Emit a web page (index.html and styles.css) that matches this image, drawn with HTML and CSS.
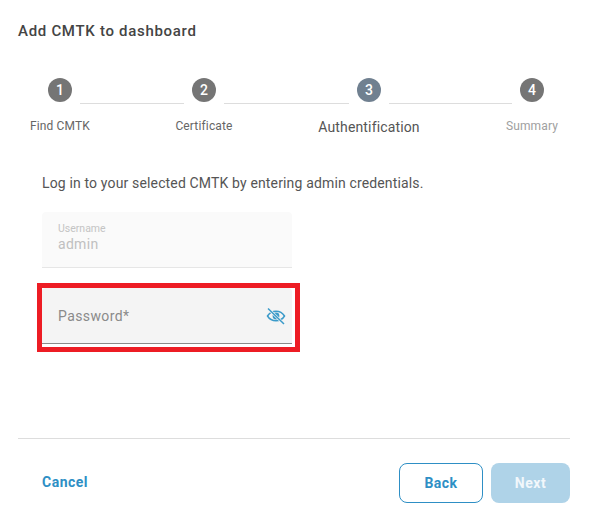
FILE: index.html
```html
<!DOCTYPE html>
<html lang="en">

<head>
    <meta charset="UTF-8">
    <meta name="viewport" content="width=device-width, initial-scale=1.0">
    <title>Add CMTK to dashboard</title>
    <link rel="stylesheet" href="styles.css">
</head>

<body>
    <div class="dialog">
        <h1 class="dialog-title">Add CMTK to dashboard</h1>

        <!-- Stepper -->
        <div class="stepper">
            <div class="step">
                <span class="step-num">1</span>
                <span class="step-label">Find CMTK</span>
            </div>
            <div class="step-line line-a"></div>
            <div class="step">
                <span class="step-num">2</span>
                <span class="step-label">Certificate</span>
            </div>
            <div class="step-line line-b"></div>
            <div class="step step-active">
                <span class="step-num">3</span>
                <span class="step-label">Authentification</span>
            </div>
            <div class="step-line line-c"></div>
            <div class="step step-todo">
                <span class="step-num">4</span>
                <span class="step-label">Summary</span>
            </div>
        </div>

        <!-- Form -->
        <div class="dialog-body">
            <p class="intro">Log in to your selected CMTK by entering admin credentials.</p>

            <div class="field field-disabled">
                <span class="field-label">Username</span>
                <span class="field-value">admin</span>
            </div>

            <div class="field field-password">
                <span class="field-placeholder">Password*</span>
                <svg class="eye-icon" width="20" height="20" viewBox="0 0 20 20" fill="none" stroke="#3a9ac9" stroke-width="1.500">
                    <path d="M1.500 10C3.500 6.700 6.500 5.200 10 5.200s6.500 1.500 8.500 4.800c-2 3.300-5 4.800-8.500 4.800s-6.500-1.500-8.500-4.800z" />
                    <circle cx="10" cy="10" r="3.400" fill="#3a9ac9" stroke="none" />
                    <path d="M2 2.500l16 15.500" stroke="#f4f4f4" stroke-width="2.600" />
                    <path d="M2 2.500l16 15.500" />
                </svg>
                <div class="highlight"></div>
            </div>
        </div>

        <!-- Footer -->
        <div class="dialog-footer">
            <a href="#" class="cancel-link">Cancel</a>
            <div class="footer-btns">
                <button type="button" class="btn btn-back">Back</button>
                <button type="button" class="btn btn-next" disabled>Next</button>
            </div>
        </div>
    </div>
</body>

</html>
```

FILE: styles.css
```css
/* Page */
body {
    margin: 0;
    background-color: white;
    font-family: Roboto, "Liberation Sans", Arial, sans-serif;
    color: #333;
}

.dialog {
    width: 589px;
    height: 523px;
    padding: 22px 19px 0 18px;
    box-sizing: border-box;
    display: flex;
    flex-direction: column;
}

.dialog-title {
    margin: 0;
    font-size: 15px;
    line-height: 18px;
    font-weight: 500;
    letter-spacing: 0.7px;
    color: #444;
}

/* Stepper */
.stepper {
    display: flex;
    margin-top: 38px;
    padding-left: 30px;
}

.step {
    width: 24px;
    display: flex;
    flex-direction: column;
    align-items: center;
}

.step-num {
    width: 24px;
    height: 24px;
    border-radius: 50%;
    background-color: #757575;
    color: white;
    font-size: 14px;
    font-weight: 500;
    line-height: 24px;
    text-align: center;
}

.step-label {
    margin-top: 17px;
    font-size: 12px;
    line-height: 14px;
    letter-spacing: 0.15px;
    white-space: nowrap;
    color: #666;
}

.step-active .step-num {
    background-color: #708090;
}

.step-active .step-label {
    margin-top: 17px;
    font-size: 14px;
    line-height: 17px;
    letter-spacing: 0.15px;
    color: #555;
}

.step-todo .step-label {
    color: #a0a0a0;
}

.step-line {
    height: 1px;
    margin: 25px 8px 0;
    background-color: #ddd;
}

.line-a {
    width: 104px;
}

.line-b {
    width: 125px;
}

.line-c {
    width: 123px;
}

/* Form */
.dialog-body {
    flex: 1;
    padding: 39px 0 0 24px;
}

.intro {
    margin: 0 0 20px;
    font-size: 14px;
    line-height: 17px;
    letter-spacing: 0.15px;
    color: #555;
}

.field {
    position: relative;
    width: 250px;
    box-sizing: border-box;
    padding-left: 16px;
    border-radius: 4px 4px 0 0;
}

.field-disabled {
    height: 56px;
    padding-top: 10px;
    background-color: #fafafa;
    border-bottom: 1px solid #e6e6e6;
    display: flex;
    flex-direction: column;
}

.field-label {
    font-size: 10.5px;
    line-height: 13px;
    color: #c4c4c4;
}

.field-value {
    margin-top: 1px;
    font-size: 14px;
    line-height: 17px;
    letter-spacing: 0.3px;
    color: #c0c0c0;
}

.field-password {
    height: 56px;
    margin-top: 20px;
    padding-right: 6px;
    background-color: #f4f4f4;
    border-bottom: 1px solid #8a8a8a;
    display: flex;
    align-items: center;
    justify-content: space-between;
}

.field-placeholder {
    font-size: 14px;
    letter-spacing: 0.4px;
    color: #8a8a8a;
}

/* Red annotation drawn over the password field */
.highlight {
    position: absolute;
    top: -5px;
    left: -5px;
    width: 263px;
    height: 69px;
    box-sizing: border-box;
    border: 5px solid #ed1c24;
}

/* Footer */
.dialog-footer {
    height: 85px;
    box-sizing: border-box;
    border-top: 1px solid #ddd;
    padding: 24px 0 0 24px;
    display: flex;
    justify-content: space-between;
    align-items: flex-start;
}

.cancel-link {
    margin-top: 11px;
    font-size: 14px;
    line-height: 17px;
    font-weight: 700;
    letter-spacing: 0.5px;
    color: #2e8fc5;
    text-decoration: none;
}

.footer-btns {
    display: flex;
    gap: 8px;
}

.btn {
    height: 40px;
    padding-bottom: 2px;
    border-radius: 8px;
    font-family: inherit;
    font-size: 14px;
    font-weight: 700;
    letter-spacing: 0.5px;
}

.btn-back {
    width: 84px;
    background-color: white;
    border: 1px solid #2e8fc5;
    color: #2e8fc5;
}

.btn-next {
    width: 79px;
    background-color: #afd3e8;
    border: none;
    color: #f2f7fb;
}
```
